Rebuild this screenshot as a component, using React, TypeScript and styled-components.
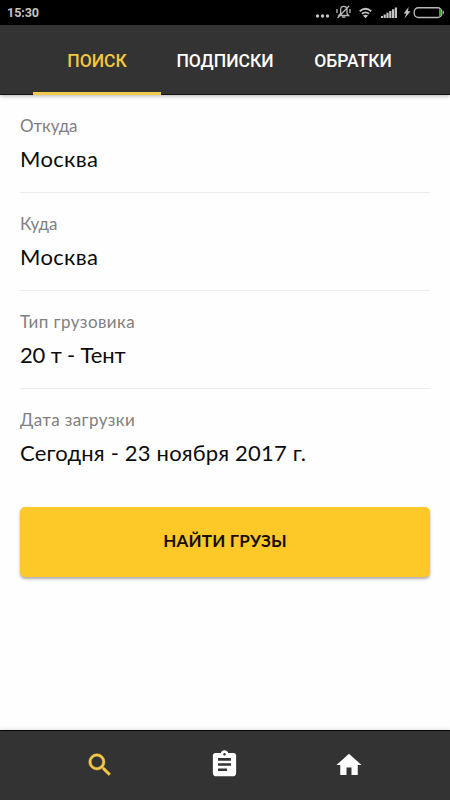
import React from 'react';
import styled, { createGlobalStyle } from 'styled-components';

const GlobalStyle = createGlobalStyle`
  * { box-sizing: border-box; }
  body { margin: 0; background: #fefefe; }
`;

const Screen = styled.div`
  width: 450px;
  height: 800px;
  display: flex;
  flex-direction: column;
  overflow: hidden;
  background: #fefefe;
  font-family: Lato, 'Open Sans', sans-serif;
`;

const StatusBar = styled.header`
  height: 25px;
  flex: none;
  display: flex;
  align-items: center;
  justify-content: space-between;
  padding-left: 7px;
  background: #000;
`;

const Clock = styled.span`
  font: 700 12.6px/25px Roboto, sans-serif;
  letter-spacing: -0.1px;
  color: #c4c4c4;
`;

const StatusIcons = styled.svg`
  display: block;
  width: 150px;
  height: 25px;
`;

const TabBar = styled.nav`
  height: 70px;
  flex: none;
  display: flex;
  padding: 0 33px;
  background: #333;
  border-bottom: 1px solid #111;
  box-shadow: 0 1px 4px rgba(0, 0, 0, 0.3);
`;

const Tab = styled.button<{ $active?: boolean }>`
  flex: 1;
  margin: 0 0 -1px;
  padding: 4px 0 0;
  border: 0;
  border-bottom: 3px solid ${(p) => (p.$active ? '#efcb4e' : 'transparent')};
  background: none;
  color: ${(p) => (p.$active ? '#f3c740' : '#fff')};
  font: 500 17.5px/22px Roboto, sans-serif;
  white-space: nowrap;
`;

const Form = styled.main`
  flex: 1;
  display: flex;
  flex-direction: column;
  padding: 0 20px;
`;

const Field = styled.div<{ $last?: boolean }>`
  height: 98px;
  flex: none;
  padding-top: 20px;
  border-bottom: 1px solid ${(p) => (p.$last ? 'transparent' : '#ececec')};
`;

const Label = styled.div<{ $spacing: number }>`
  font-size: 17px;
  line-height: 22px;
  letter-spacing: ${(p) => p.$spacing}px;
  color: #808080;
`;

const Value = styled.div<{ $spacing: number }>`
  margin-top: 9px;
  font-size: 22px;
  line-height: 26px;
  letter-spacing: ${(p) => p.$spacing}px;
  color: #0c0c0c;
  white-space: nowrap;
`;

const SubmitButton = styled.button`
  height: 70px;
  flex: none;
  margin-top: 20px;
  padding: 0 0 2px;
  border: 0;
  border-radius: 5px;
  background: #fdc928;
  box-shadow: 0 2px 3px rgba(0, 0, 0, 0.32);
  color: #170f08;
  font: 700 17px/22px Lato, sans-serif;
  letter-spacing: 0.2px;
`;

const BottomBar = styled.nav`
  height: 70px;
  flex: none;
  display: flex;
  padding: 0 39px 2px 38px;
  background: #333;
  border-top: 1px solid #050505;
  box-shadow: 0 -1px 4px rgba(0, 0, 0, 0.1);
`;

const NavItem = styled.button<{ $active?: boolean }>`
  flex: 1;
  display: flex;
  align-items: center;
  justify-content: center;
  padding: 0;
  border: 0;
  background: none;
  color: ${(p) => (p.$active ? '#f5c748' : '#fff')};
`;

const fields = [
  { label: 'Откуда', value: 'Москва', labelSpacing: -0.08, valueSpacing: 0.35 },
  { label: 'Куда', value: 'Москва', labelSpacing: 0, valueSpacing: 0.35 },
  { label: 'Тип грузовика', value: '20 т - Тент', labelSpacing: 0.42, valueSpacing: -0.16 },
  { label: 'Дата загрузки', value: 'Сегодня - 23 ноября 2017 г.', labelSpacing: 0.38, valueSpacing: 0.19 },
];

const navIcons = [
  {
    name: 'Поиск',
    size: 30,
    stroke: 0.35,
    path: 'M15.5 14h-.79l-.28-.27A6.471 6.471 0 0 0 16 9.5 6.5 6.5 0 1 0 9.5 16c1.61 0 3.09-.59 4.23-1.57l.27.28v.79l5 4.99L20.49 19l-4.99-5zm-6 0C7.01 14 5 11.99 5 9.5S7.01 5 9.5 5 14 7.01 14 9.5 11.99 14 9.5 14z',
  },
  {
    name: 'Заявки',
    size: 31,
    stroke: 0,
    path: 'M19 3h-4.18C14.4 1.84 13.3 1 12 1c-1.3 0-2.4.84-2.82 2H5c-1.1 0-2 .9-2 2v14c0 1.1.9 2 2 2h14c1.1 0 2-.9 2-2V5c0-1.1-.9-2-2-2zm-7 0c.55 0 1 .45 1 1s-.45 1-1 1-1-.45-1-1 .45-1 1-1zm2 14H7v-2h7v2zm3-4H7v-2h10v2zm0-4H7V7h10v2z',
  },
  { name: 'Главная', size: 30, stroke: 0, path: 'M10 20v-6h4v6h5v-8h3L12 3 2 12h3v8z' },
];

function StatusGlyphs() {
  return (
    <StatusIcons viewBox="0 0 150 25" fill="#c4c4c4" aria-hidden="true">
      <circle cx="17.5" cy="16" r="1.7" />
      <circle cx="22.5" cy="16" r="1.7" />
      <circle cx="27.5" cy="16" r="1.7" />
      <g fill="none" stroke="#b8b8b8" strokeWidth="1.3">
        <path d="M39 15.5l1.6-2V10c0-2.5 1-3.6 3-3.6s3.4 1.1 3.4 3.6v3.5l1.6 2zM42 17.2h3.4M37 9v4M50 9v4M37.5 18L49 6" />
      </g>
      <g fill="none" stroke="#c4c4c4" strokeWidth="1.8">
        <path d="M59.7 11.2q5.8-4.8 11.6 0" />
        <path d="M61.9 13.8q3.6-2.8 7.2 0" />
      </g>
      <path d="M62.9 15.6q2.6-1.6 5.2 0l-2.6 2.6z" />
      <path d="M81 16h2v2h-2zM83.6 14.5h2.2V18h-2.2zM86.4 12.8h2.2V18h-2.2zM89.2 11h2.2v7h-2.2zM92 9.3h2.2V18H92zM94.8 7.5H97V18h-2.2z" />
      <path d="M108.7 7l-5 6.4h2.6L104.4 18.5l6.2-7.3h-2.8z" />
      <rect x="114.2" y="7.7" width="27.6" height="9.8" rx="4.2" fill="none" stroke="#b8b8b8" strokeWidth="1.4" />
      <path d="M143 10.5v4q1-.4 1-2t-1-2z" />
      <path d="M139 9h1.2q1.2 1 1.2 3.5t-1.2 3.6H139z" fill="#43a52e" />
    </StatusIcons>
  );
}

export default function App() {
  return (
    <Screen>
      <GlobalStyle />
      <StatusBar>
        <Clock>15:30</Clock>
        <StatusGlyphs />
      </StatusBar>
      <TabBar>
        <Tab $active>ПОИСК</Tab>
        <Tab>ПОДПИСКИ</Tab>
        <Tab>ОБРАТКИ</Tab>
      </TabBar>
      <Form>
        {fields.map((f, i) => (
          <Field key={f.label} $last={i === fields.length - 1}>
            <Label $spacing={f.labelSpacing}>{f.label}</Label>
            <Value $spacing={f.valueSpacing}>{f.value}</Value>
          </Field>
        ))}
        <SubmitButton>НАЙТИ ГРУЗЫ</SubmitButton>
      </Form>
      <BottomBar>
        {navIcons.map((icon, i) => (
          <NavItem key={icon.name} $active={i === 0} aria-label={icon.name}>
            <svg
              width={icon.size}
              height={icon.size}
              viewBox="0 0 24 24"
              fill="currentColor"
              stroke="currentColor"
              strokeWidth={icon.stroke}
            >
              <path d={icon.path} />
            </svg>
          </NavItem>
        ))}
      </BottomBar>
    </Screen>
  );
}
